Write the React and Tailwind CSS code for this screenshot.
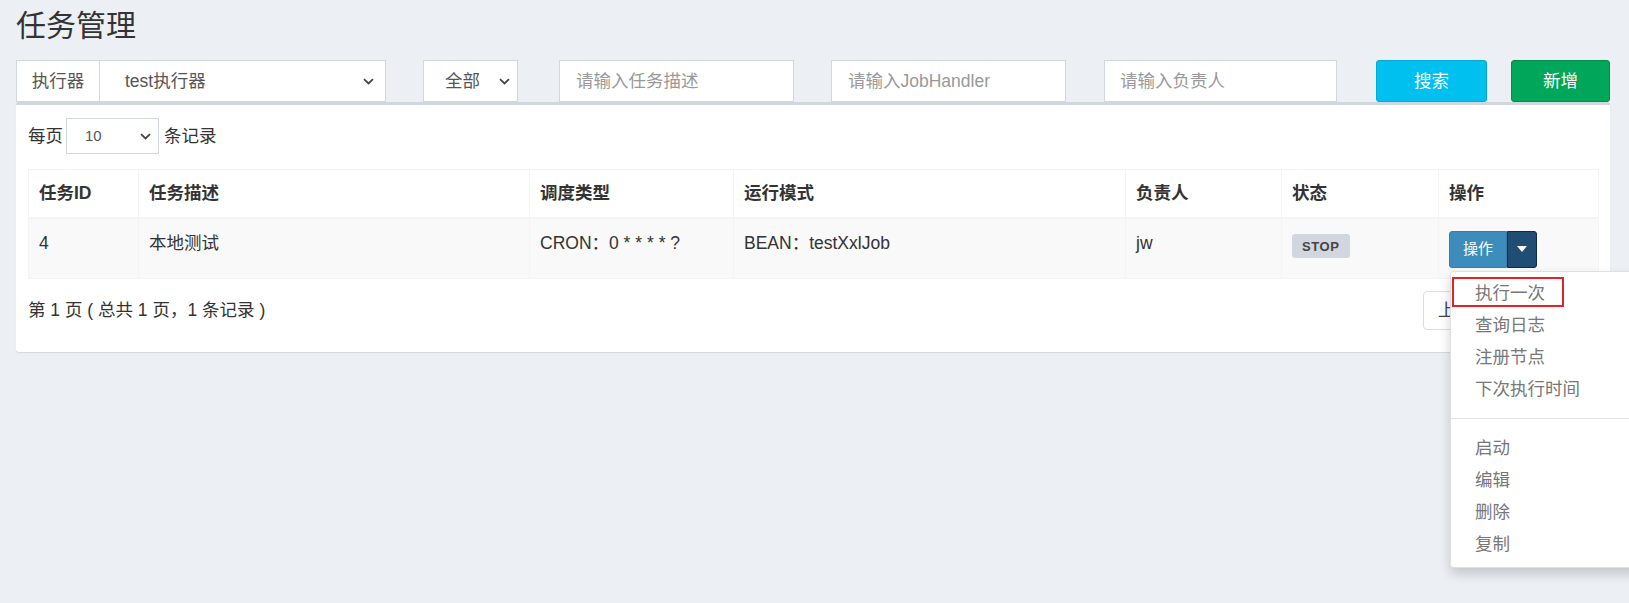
import React from "react";

const FONT = { fontFamily: '"Liberation Sans", "Noto Sans CJK SC", sans-serif' };

function Chevron({ className = "" }) {
  return (
    <svg width="11" height="7" viewBox="0 0 11 7" className={className}>
      <path d="M1 1.2 L5.5 5.5 L10 1.2" fill="none" stroke="#444" strokeWidth="1.8" />
    </svg>
  );
}

const columns = [
  { label: "任务ID", w: "w-[110px]" },
  { label: "任务描述", w: "w-[391px]" },
  { label: "调度类型", w: "w-[204px]" },
  { label: "运行模式", w: "w-[392px]" },
  { label: "负责人", w: "w-[156px]" },
  { label: "状态", w: "w-[157px]" },
  { label: "操作", w: "w-[160px]" },
];

const menuTop = ["执行一次", "查询日志", "注册节点", "下次执行时间"];
const menuBottom = ["启动", "编辑", "删除", "复制"];

export default function App() {
  return (
    <div style={FONT} className="relative w-[1629px] h-[603px] overflow-hidden bg-[#ecf0f5] text-[#333]">
      {/* 标题 */}
      <h1 className="pl-[16px] pt-[5px] h-[60px] text-[30px] leading-[42px] font-normal">任务管理</h1>

      {/* 筛选栏 */}
      <div className="flex items-start h-[42px] text-[17.5px]">
        <div className="ml-[16px] w-[370px] h-[42px] flex">
          <span className="w-[84px] h-full flex items-center justify-center bg-white border border-[#d2d6de] text-[#555]">执行器</span>
          <div className="flex-1 h-full flex items-center justify-between bg-white border border-l-0 border-[#d2d6de] pl-[25px] pr-[11px] text-[#555]">
            <span>test执行器</span>
            <Chevron />
          </div>
        </div>
        <div className="ml-[37px] w-[95px] h-[42px] flex items-center justify-between bg-white border border-[#d2d6de] pl-[21px] pr-[7px] text-[#555]">
          <span>全部</span>
          <Chevron />
        </div>
        <div className="ml-[41px] w-[235px] h-[42px] flex items-center bg-white border border-[#d2d6de] pl-[16px] text-[#999]">请输入任务描述</div>
        <div className="ml-[37px] w-[235px] h-[42px] flex items-center bg-white border border-[#d2d6de] pl-[16px] text-[#999]">请输入JobHandler</div>
        <div className="ml-[38px] w-[233px] h-[42px] flex items-center bg-white border border-[#d2d6de] pl-[15px] text-[#999]">请输入负责人</div>
        <button className="ml-[39px] w-[111px] h-[42px] rounded-[3px] bg-[#00c0ef] border border-[#00acd6] text-white">搜索</button>
        <button className="ml-[24px] w-[99px] h-[42px] rounded-[3px] bg-[#00a65a] border border-[#008d4c] text-white">新增</button>
      </div>

      {/* 列表 */}
      <div className="ml-[16px] w-[1594px] h-[250px] bg-white border-t-[3px] border-[#d2d6de] rounded-[3px] shadow-[0_1px_1px_rgba(0,0,0,0.1)] px-[12px] pt-[13px]">
        <div className="flex items-center h-[36px] text-[17.5px]">
          <span>每页</span>
          <div className="ml-[3px] w-[93px] h-[36px] flex items-center justify-between border border-[#d2d6de] pl-[18px] pr-[7px] text-[15px] text-[#555]">
            <span>10</span>
            <Chevron />
          </div>
          <span className="ml-[5px]">条记录</span>
        </div>

        <table className="mt-[15px] w-[1570px] border-collapse text-[17.5px] table-fixed">
          <thead>
            <tr className="h-[48px]">
              {columns.map((c) => (
                <th key={c.label} className={`${c.w} border border-[#f4f4f4] border-b-2 px-[10px] text-left font-bold`}>
                  {c.label}
                </th>
              ))}
            </tr>
          </thead>
          <tbody>
            <tr className="h-[61px] bg-[#f9f9f9] align-top">
              <td className="border border-[#f4f4f4] px-[10px] pt-[11px]">4</td>
              <td className="border border-[#f4f4f4] px-[10px] pt-[11px]">本地测试</td>
              <td className="border border-[#f4f4f4] px-[10px] pt-[11px]">CRON：0 * * * * ?</td>
              <td className="border border-[#f4f4f4] px-[10px] pt-[11px]">BEAN：testXxlJob</td>
              <td className="border border-[#f4f4f4] px-[10px] pt-[11px]">jw</td>
              <td className="border border-[#f4f4f4] px-[10px] pt-[13px]">
                <span className="inline-flex items-center h-[24px] px-[10px] rounded-[3px] bg-[#d2d6de] text-[#444] text-[13px] font-bold tracking-[0.6px]">STOP</span>
              </td>
              <td className="border border-[#f4f4f4] px-[10px] pt-[12px]">
                <div className="flex h-[37px] w-[88px]">
                  <span className="w-[58px] flex items-center justify-center bg-[#3c8dbc] border border-[#367fa9] rounded-l-[3px] text-white text-[15px]">操作</span>
                  <span className="w-[30px] flex items-center justify-center bg-[#204d74] border border-[#122b40] rounded-r-[3px]">
                    <svg width="10" height="6" viewBox="0 0 10 6">
                      <path d="M0 0 L10 0 L5 6 Z" fill="#fff" />
                    </svg>
                  </span>
                </div>
              </td>
            </tr>
          </tbody>
        </table>

        <div className="flex items-center justify-between mt-[12px] h-[39px]">
          <span className="text-[17.5px]">第 1 页 ( 总共 1 页，1 条记录 )</span>
          <div className="flex h-[39px] text-[17.5px] text-[#444]">
            <span className="w-[88px] flex items-center justify-start pl-[14px] border border-[#ddd] rounded-l-[4px]">上页</span>
            <span className="w-[87px] flex items-center justify-center border border-l-0 border-[#ddd] rounded-r-[4px]">下页</span>
          </div>
        </div>
      </div>

      {/* 下拉菜单 */}
      <div className="absolute left-[1450px] top-[271px] w-[230px] bg-white border border-[rgba(0,0,0,0.12)] rounded-[4px] shadow-[0_6px_12px_rgba(0,0,0,0.175)] pt-[5px] pb-[7px] text-[17.5px] text-[#777]">
        {menuTop.map((m, i) => (
          <div key={m} className="relative h-[32px] leading-[32px] pl-[24px]">
            {m}
            {i === 0 ? (
              <span className="absolute left-[1px] top-0 w-[112px] h-[30px] border-2 border-[#e5212a]" />
            ) : null}
          </div>
        ))}
        <div className="h-px bg-[#e5e5e5] my-[13px]" />
        {menuBottom.map((m) => (
          <div key={m} className="h-[32px] leading-[32px] pl-[24px]">{m}</div>
        ))}
      </div>
    </div>
  );
}
